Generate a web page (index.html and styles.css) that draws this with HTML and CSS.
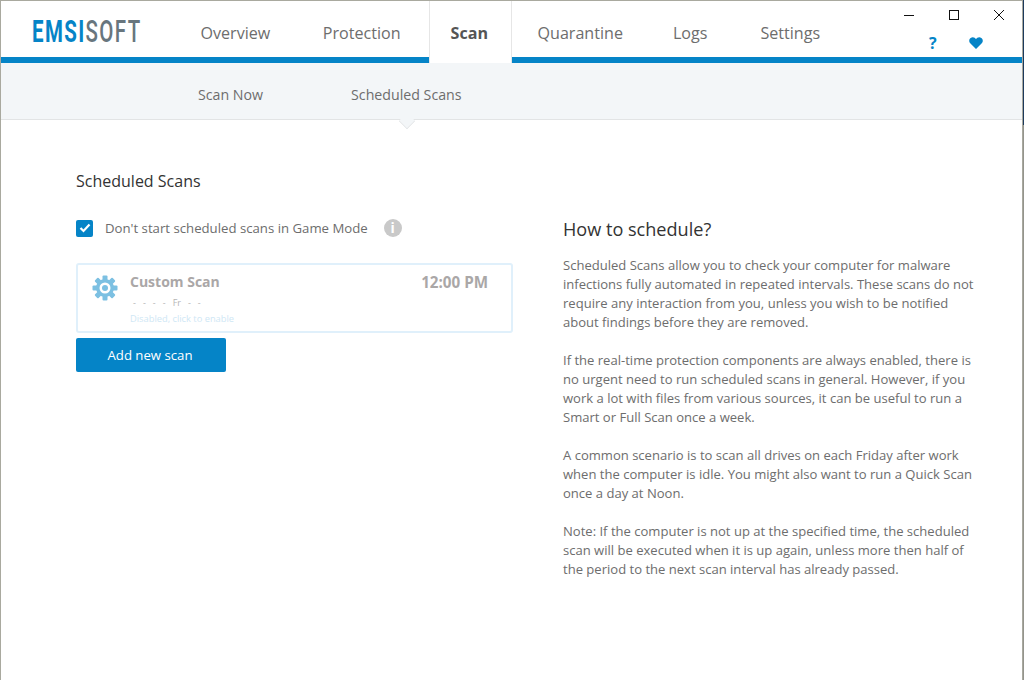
FILE: index.html
```html
<!DOCTYPE html>
<html lang="en">
<head>
<meta charset="utf-8">
<title>Emsisoft - Scheduled Scans</title>
<link rel="stylesheet" href="styles.css">
</head>
<body>
<div class="window">
  <header class="topbar">
    <div class="logo"><span class="logo-text"><span class="logo-a">EMSI</span><span class="logo-b">SOFT</span></span></div>
    <nav class="tabs">
      <a class="tab t-overview">Overview</a>
      <a class="tab t-protection">Protection</a>
      <a class="tab active">Scan</a>
      <a class="tab t-quarantine">Quarantine</a>
      <a class="tab t-logs">Logs</a>
      <a class="tab">Settings</a>
    </nav>
    <div class="controls">
      <div class="winbtns">
        <svg width="12" height="12" viewBox="0 0 12 12"><path d="M1 6.500h10" stroke="#111" fill="none"/></svg>
        <svg width="12" height="12" viewBox="0 0 12 12"><rect x="1.500" y="1.500" width="9" height="9" stroke="#111" fill="none"/></svg>
        <svg width="12" height="12" viewBox="0 0 12 12"><path d="M1 1l10 10M11 1L1 11" stroke="#111" fill="none"/></svg>
      </div>
      <div class="helpers">
        <span class="help">?</span>
        <svg width="14" height="12" viewBox="0 0 14 12"><path d="M7 12L1 6C-.6 4.200 .2 .4 3.500 .2 5 .1 6.300 .9 7 2.100 7.700 .9 9 .1 10.500 .2 13.800 .4 14.600 4.200 13 6z" fill="#0584c7"/></svg>
      </div>
    </div>
  </header>
  <div class="subnav">
    <a class="sub">Scan Now</a>
    <a class="sub s-sched">Scheduled Scans</a>
    <span class="caret"></span>
  </div>
  <main class="content">
    <section class="left">
      <h2 class="title">Scheduled Scans</h2>
      <label class="check">
        <span class="box"><svg width="12" height="10" viewBox="0 0 12 10"><path d="M1.500 5l3 3L10.500 1.500" stroke="#fff" stroke-width="2.200" fill="none"/></svg></span>
        <span class="check-text">Don't start scheduled scans in Game Mode</span>
        <span class="info">i</span>
      </label>
      <div class="card">
        <svg class="gear" width="26" height="26" viewBox="0 0 26 26">
          <g fill="#7cc0e2">
            <circle cx="13" cy="13" r="9"/>
            <rect x="10.500" y="0.500" width="5" height="25" rx="1"/>
            <rect x="10.500" y="0.500" width="5" height="25" rx="1" transform="rotate(45 13 13)"/>
            <rect x="10.500" y="0.500" width="5" height="25" rx="1" transform="rotate(90 13 13)"/>
            <rect x="10.500" y="0.500" width="5" height="25" rx="1" transform="rotate(135 13 13)"/>
          </g>
          <circle cx="13" cy="13" r="5.500" fill="#fff"/>
          <circle cx="13" cy="13" r="3" fill="#7cc0e2"/>
        </svg>
        <div class="card-body">
          <div class="card-head"><span class="card-name">Custom Scan</span><span class="card-time">12:00 PM</span></div>
          <div class="days"><span>-</span><span>-</span><span>-</span><span>-</span><span>Fr</span><span>-</span><span>-</span></div>
          <div class="state">Disabled, click to enable</div>
        </div>
      </div>
      <button class="add">Add new scan</button>
    </section>
    <aside class="right">
      <h2 class="how">How to schedule?</h2>
      <p>Scheduled Scans allow you to check your computer for malware<br>infections fully automated in repeated intervals. These scans do not<br>require any interaction from you, unless you wish to be notified<br>about findings before they are removed.</p>
      <p>If the real-time protection components are always enabled, there is<br>no urgent need to run scheduled scans in general. However, if you<br>work a lot with files from various sources, it can be useful to run a<br>Smart or Full Scan once a week.</p>
      <p>A common scenario is to scan all drives on each Friday after work<br>when the computer is idle. You might also want to run a Quick Scan<br>once a day at Noon.</p>
      <p>Note: If the computer is not up at the specified time, the scheduled<br>scan will be executed when it is up again, unless more then half of<br>the period to the next scan interval has already passed.</p>
    </aside>
  </main>
</div>
</body>
</html>
```
FILE: styles.css
```css
* { box-sizing: border-box; }
html, body { margin: 0; padding: 0; background: #fff; }
body { width: 1024px; height: 680px; overflow: hidden; font-family: "Open Sans", "Noto Sans", sans-serif; background: linear-gradient(#1d3a5c 0, #1d3a5c 125px, #94948c 125px, #94948c 100%); }
.window { width: 1023px; height: 680px; border-top: 1px solid #a9a99f; border-left: 1px solid #a9a99f; border-right: 1px solid #a9a99f; background: #fff; }
.topbar { height: 62px; display: flex; border-bottom: 6px solid #0584c7; position: relative; }
.logo { width: 174px; padding: 13px 0 0 31px; font-family: "Roboto", sans-serif; font-size: 31px; line-height: 36px; font-weight: 500; white-space: nowrap; }
.logo-text { display: inline-block; letter-spacing: 2.100px; transform: scaleX(.66); transform-origin: 0 50%; }
.logo-a { color: #0584c7; font-weight: 700; }
.logo-b { color: #68767e; }
.tabs { display: flex; height: 62px; }
.tab { display: block; font-size: 16.100px; line-height: 64px; color: #6d6d6d; padding: 0 25.500px; height: 56px; white-space: nowrap; }
.t-overview { padding-right: 27px; }
.t-protection { padding-right: 28px; }
.t-quarantine { padding-right: 24.500px; }
.t-logs { padding-right: 27.500px; }
.tab.active { height: 62px; background: #fff; font-weight: 700; color: #555; border-left: 1px solid #e6e6e6; border-right: 1px solid #e6e6e6; padding: 0 23px 0 21px; position: relative; z-index: 1; }
.controls { margin-left: auto; width: 145px; }
.winbtns { display: flex; justify-content: flex-end; gap: 33px; padding: 8px 17px 0 0; }
.winbtns svg { display: block; }
.helpers { display: flex; align-items: center; gap: 32px; padding: 12px 0 0 52px; }
.help { color: #0584c7; font-weight: 700; font-size: 16px; line-height: 20px; }
.subnav { height: 57px; background: #f3f6f8; border-bottom: 1px solid #e2e4e5; display: flex; position: relative; padding-left: 197px; }
.sub { font-size: 14.200px; line-height: 63px; color: #6d6d6d; white-space: nowrap; }
.s-sched { margin-left: 88px; }
.caret { position: absolute; left: 398px; top: 50px; width: 16px; height: 16px; background: #f3f6f8; border-right: 1px solid #e2e4e5; border-bottom: 1px solid #e2e4e5; transform: rotate(45deg) scale(.72); }
.content { display: flex; }
.left { width: 562px; padding: 50px 0 0 75px; }
.title { margin: 0; font-size: 16px; font-weight: 400; line-height: 22px; color: #333; }
.check { display: flex; align-items: center; margin-top: 26px; height: 20px; }
.box { width: 17px; height: 17px; background: #0584c7; border-radius: 2px; display: flex; align-items: center; justify-content: center; }
.check-text { font-size: 13.200px; color: #6d6d6d; margin-left: 12px; white-space: nowrap; }
.info { width: 18px; height: 18px; margin-left: 16px; border-radius: 50%; background: #c9c9c9; color: #fff; font-size: 14px; font-weight: 700; line-height: 18px; text-align: center; }
.card { width: 437px; height: 70px; margin-top: 25px; border: 2px solid #e0f0fb; border-radius: 3px; display: flex; padding: 7px 23px 0 14px; }
.gear { margin-top: 3px; flex: none; }
.card-body { flex: 1; margin-left: 12px; }
.card-head { display: flex; justify-content: space-between; align-items: center; }
.card-name { font-size: 14px; font-weight: 700; line-height: 20px; color: #aaa7a7; }
.card-time { font-size: 15.200px; font-weight: 700; line-height: 20px; color: #aaa7a7; }
.days { display: flex; gap: 7px; font-size: 9px; line-height: 12px; color: #b5b5b5; margin-top: 5px; padding-left: 3px; }
.state { font-size: 9.300px; line-height: 12px; color: #cfe7f5; margin-top: 4px; }
.add { display: block; width: 150px; height: 34px; margin-top: 5px; padding: 0 2px 0 0; background: #0584c7; border: 0; border-radius: 2px; color: #fff; font: 400 13.200px "Open Sans", sans-serif; }
.right { padding: 96px 0 0 0; width: 430px; }
.how { margin: 0 0 14px; font-size: 18.100px; font-weight: 400; line-height: 26px; color: #333; }
.right p { margin: 0 0 19px; font-size: 13.050px; line-height: 19px; color: #6d6d6d; white-space: nowrap; }
```
